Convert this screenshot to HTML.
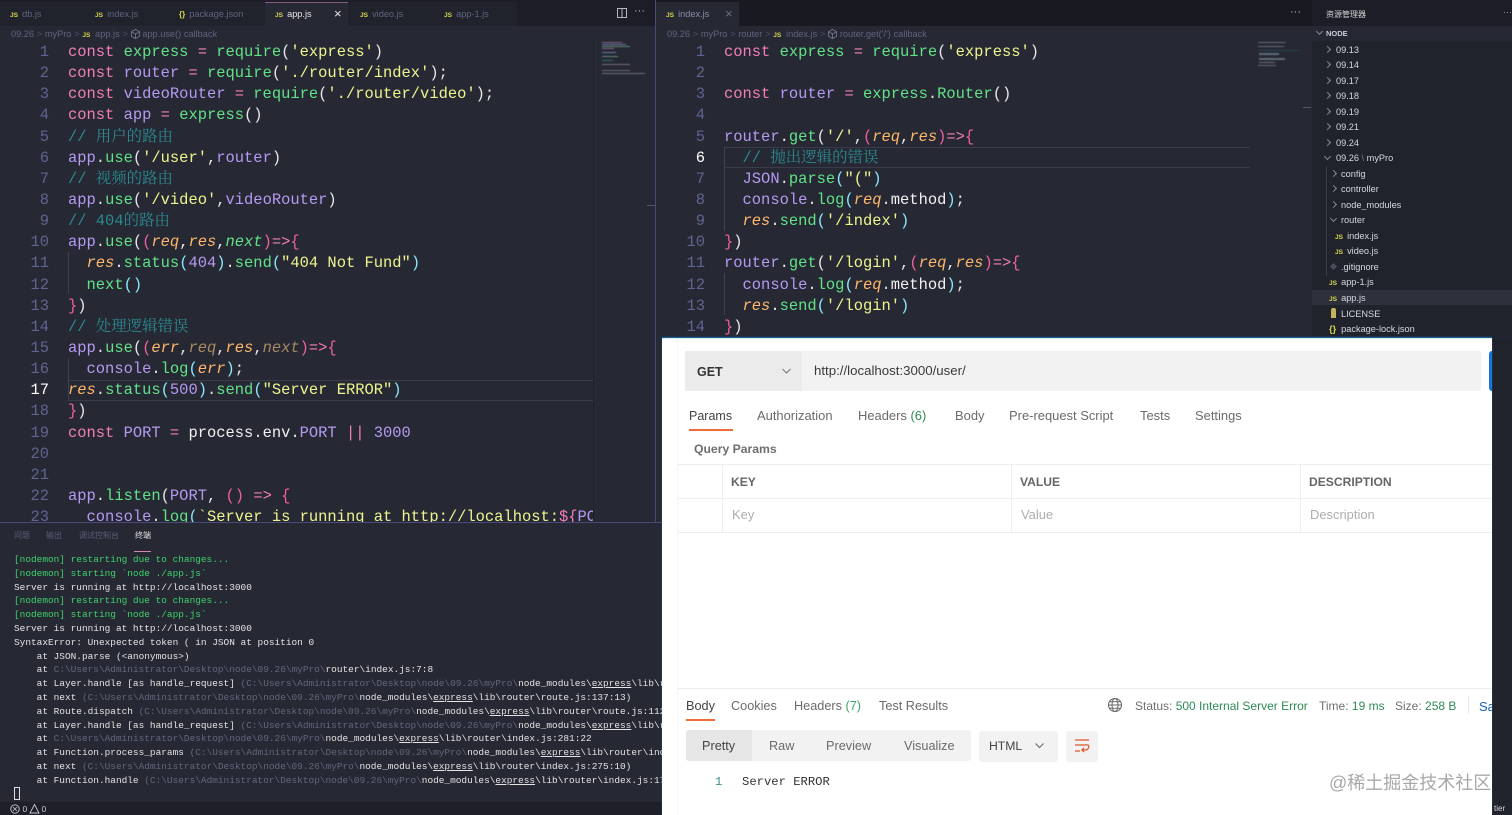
<!DOCTYPE html>
<html lang="zh">
<head>
<meta charset="utf-8">
<title>VS Code and Postman</title>
<style>
html,body{margin:0;padding:0;width:1512px;height:815px;overflow:hidden;background:#262833}
*{box-sizing:border-box}
.a{position:absolute;white-space:pre}
.code{position:absolute;font:15.45px/21.14px "Liberation Mono","Noto Serif CJK SC",monospace;color:#e8e8e8;white-space:pre;filter:blur(.3px)}
.nums{position:absolute;font:15.45px/21.14px "Liberation Mono",monospace;color:#5f6590;text-align:right;white-space:pre;filter:blur(.3px)}
.k{color:#f27fb8}.g{color:#62e388}.p{color:#b79af2}.s{color:#eef58f}.o{color:#ffb86c;font-style:italic}.d{color:#a88a62;font-style:italic}.w{color:#f2f2f2}.c{color:#8be9fd}.m{color:#2b8a90}.b{color:#f0609f}.wh{color:#fff}
.tab{position:absolute;top:8px;font:9.2px/12px "Liberation Sans",sans-serif;color:#5f6480;white-space:pre;filter:blur(.3px)}
.js{color:#d6d64e;font:bold 6.6px/12px "Liberation Sans",sans-serif;margin-right:4px}
.bc{position:absolute;top:28px;font:9.2px/12px "Liberation Sans",sans-serif;word-spacing:.2px;color:#60647f;white-space:pre;filter:blur(.3px)}
.term{position:absolute;left:14px;top:553px;width:648px;height:242px;overflow:hidden;font:9.45px/13.8px "Liberation Mono",monospace;color:#e4e4e4;white-space:pre;filter:blur(.25px)}
.n{color:#3ed46d}.q{color:#62677c}.u{text-decoration:underline}
.tt{position:absolute;top:530px;font:8px/12px "Liberation Sans","Noto Sans CJK SC",sans-serif;color:#5a5f78;filter:blur(.3px)}
.row{position:absolute;font:9.2px/12px "Liberation Sans",sans-serif;color:#d5d8e0;white-space:pre;filter:blur(.2px)}
.cr,.cd{position:absolute;width:5px;height:5px;border-right:1px solid #868a9a;border-bottom:1px solid #868a9a}
.cr{transform:rotate(-45deg)}.cd{transform:rotate(45deg)}
.pm{position:absolute;transform:translateY(1px);font:12.95px/16px "Liberation Sans",sans-serif;color:#6b6b6b;white-space:pre;filter:blur(.2px)}
.lo{font-size:12.7px}
.gr{color:#2f8a56}
</style>
</head>
<body>
<!-- left editor -->
<div class="a" style="left:0;top:0;width:655px;height:522px;background:#262833"></div>
<div class="a" style="left:0;top:0;width:655px;height:26px;background:#1c1d26"></div>
<div class="a" style="left:0;top:2px;width:517px;height:24px;background:#20222c"></div>
<div class="a" style="left:265px;top:2px;width:83px;height:24px;background:#262833;border-top:1px solid #8a5a86"></div>
<div class="tab" style="left:10px"><span class="js">JS</span>db.js</div>
<div class="tab" style="left:95px"><span class="js">JS</span>index.js</div>
<div class="tab" style="left:179px"><span class="js" style="font-size:8px">{}</span>package.json</div>
<div class="tab" style="left:275px;color:#e6e6e6"><span class="js">JS</span>app.js</div>
<div class="a" style="left:334px;top:8px;font:13px/12px 'Liberation Sans',sans-serif;color:#e8e8e8">×</div>
<div class="tab" style="left:360px"><span class="js">JS</span>video.js</div>
<div class="tab" style="left:444px"><span class="js">JS</span>app-1.js</div>
<svg class="a" style="left:617px;top:8px" width="10" height="10" viewBox="0 0 10 10"><rect x=".5" y=".5" width="9" height="9" fill="none" stroke="#b5b8c4"/><path d="M5 0v10" stroke="#b5b8c4"/></svg>
<div class="a" style="left:634px;top:4px;font:11px/14px 'Liberation Sans',sans-serif;color:#b5b8c4">···</div>
<div class="bc" style="left:11px">09.26 <span style="color:#4d5068">&gt;</span> myPro <span style="color:#4d5068">&gt;</span> <span class="js" style="margin-right:2px">JS</span> app.js <span style="color:#4d5068">&gt;</span> <svg width="9" height="10" viewBox="0 0 9 10" style="vertical-align:-2px"><path d="M4.500 .5 8.500 2.700V7.300L4.500 9.500 .5 7.300V2.700ZM.5 2.700 4.500 5 8.500 2.700M4.500 5V9.500" fill="none" stroke="#7a7e98" stroke-width=".8"/></svg> app.use() callback</div>

<div class="a" style="left:68px;top:380px;width:525px;height:21px;border-top:1px solid #3a3c49;border-bottom:1px solid #3a3c49"></div>
<div class="a" style="left:68px;top:252px;width:1px;height:42px;background:#3f4150"></div>
<div class="a" style="left:68px;top:358px;width:1px;height:42px;background:#3f4150"></div>
<div class="a" style="left:593px;top:40px;width:1px;height:482px;background:#1f2029"></div>
<div class="a" style="left:647px;top:205px;width:8px;height:1px;background:#555868"></div>
<div class="a" style="left:601px;top:41px;width:44px;height:38px;filter:blur(.5px);opacity:.7">
<div class="a" style="left:1px;top:1px;width:20px;height:1px;background:#a67fb5"></div>
<div class="a" style="left:1px;top:3px;width:24px;height:1px;background:#8f9ad0"></div>
<div class="a" style="left:1px;top:5px;width:28px;height:1px;background:#7fb58f"></div>
<div class="a" style="left:1px;top:7px;width:12px;height:1px;background:#a67fb5"></div>
<div class="a" style="left:1px;top:11px;width:14px;height:1px;background:#8f9ad0"></div>
<div class="a" style="left:1px;top:15px;width:16px;height:1px;background:#7fb58f"></div>
<div class="a" style="left:1px;top:19px;width:11px;height:1px;background:#3a8a90"></div>
<div class="a" style="left:1px;top:23px;width:28px;height:1px;background:#a08aa0"></div>
<div class="a" style="left:1px;top:29px;width:28px;height:1px;background:#7f8a9a"></div>
<div class="a" style="left:1px;top:32px;width:43px;height:1px;background:#8d8f9e"></div>
</div>

<div class="nums" style="left:10px;top:42px;width:39px;height:480px;overflow:hidden">1
2
3
4
5
6
7
8
9
10
11
12
13
14
15
16
<span class="wh">17</span>
18
19
20
21
22
23</div>
<div class="code" style="left:68px;top:42px;width:525px;height:480px;overflow:hidden"><span class="k">const</span> <span class="g">express</span> <span class="k">=</span> <span class="g">require</span>(<span class="s">'express'</span>)
<span class="k">const</span> <span class="p">router</span> <span class="k">=</span> <span class="g">require</span>(<span class="s">'./router/index'</span>);
<span class="k">const</span> <span class="p">videoRouter</span> <span class="k">=</span> <span class="g">require</span>(<span class="s">'./router/video'</span>);
<span class="k">const</span> <span class="p">app</span> <span class="k">=</span> <span class="g">express</span>()
<span class="m">// 用户的路由</span>
<span class="p">app</span>.<span class="g">use</span>(<span class="s">'/user'</span>,<span class="p">router</span>)
<span class="m">// 视频的路由</span>
<span class="p">app</span>.<span class="g">use</span>(<span class="s">'/video'</span>,<span class="p">videoRouter</span>)
<span class="m">// 404的路由</span>
<span class="p">app</span>.<span class="g">use</span>(<span class="b">(</span><span class="o">req</span>,<span class="o">res</span>,<span class="g" style="font-style:italic">next</span><span class="b">)</span><span class="k">=&gt;</span><span class="b">{</span>
  <span class="o">res</span>.<span class="g">status</span><span class="c">(</span><span class="p">404</span><span class="c">)</span>.<span class="g">send</span><span class="c">(</span><span class="s">"404 Not Fund"</span><span class="c">)</span>
  <span class="g">next</span><span class="c">()</span>
<span class="b">}</span>)
<span class="m">// 处理逻辑错误</span>
<span class="p">app</span>.<span class="g">use</span>(<span class="b">(</span><span class="o">err</span>,<span class="d">req</span>,<span class="o">res</span>,<span class="d">next</span><span class="b">)</span><span class="k">=&gt;</span><span class="b">{</span>
  <span class="p">console</span>.<span class="g">log</span><span class="c">(</span><span class="o">err</span><span class="c">)</span>;
<span class="o">res</span>.<span class="g">status</span><span class="c">(</span><span class="p">500</span><span class="c">)</span>.<span class="g">send</span><span class="c">(</span><span class="s">"Server ERROR"</span><span class="c">)</span>
<span class="b">}</span>)
<span class="k">const</span> <span class="p">PORT</span> <span class="k">=</span> <span class="w">process</span>.<span class="w">env</span>.<span class="p">PORT</span> <span class="k">||</span> <span class="p">3000</span>


<span class="p">app</span>.<span class="g">listen</span>(<span class="p">PORT</span>, <span class="b">()</span> <span class="k">=&gt;</span> <span class="b">{</span>
  <span class="p">console</span>.<span class="g">log</span><span class="c">(</span><span class="s">`Server is running at http://localhost:</span><span class="k">${</span><span class="p">PORT</span></div>

<!-- right editor -->
<div class="a" style="left:655px;top:0;width:657px;height:522px;background:#262833;border-left:1px solid #4a4a78"></div>
<div class="a" style="left:656px;top:0;width:656px;height:26px;background:#191a21"></div>
<div class="a" style="left:656px;top:2px;width:83px;height:24px;background:#262833"></div>
<div class="tab" style="left:666px;color:#8a8ea6"><span class="js">JS</span>index.js</div>
<div class="a" style="left:725px;top:8px;font:13px/12px 'Liberation Sans',sans-serif;color:#6a6e86">×</div>
<div class="a" style="left:1290px;top:5px;font:11px/14px 'Liberation Sans',sans-serif;color:#b5b8c4">···</div>
<div class="bc" style="left:667px">09.26 <span style="color:#4d5068">&gt;</span> myPro <span style="color:#4d5068">&gt;</span> router <span style="color:#4d5068">&gt;</span> <span class="js" style="margin-right:2px">JS</span> index.js <span style="color:#4d5068">&gt;</span> <svg width="9" height="10" viewBox="0 0 9 10" style="vertical-align:-2px"><path d="M4.500 .5 8.500 2.700V7.300L4.500 9.500 .5 7.300V2.700ZM.5 2.700 4.500 5 8.500 2.700M4.500 5V9.500" fill="none" stroke="#7a7e98" stroke-width=".8"/></svg> router.get('/') callback</div>
<div class="a" style="left:724px;top:147px;width:526px;height:21px;border-top:1px solid #3a3c49;border-bottom:1px solid #3a3c49"></div>
<div class="a" style="left:724px;top:147px;width:1px;height:84px;background:#3f4150"></div>
<div class="a" style="left:724px;top:273px;width:1px;height:42px;background:#3f4150"></div>
<div class="a" style="left:1303px;top:107px;width:8px;height:1px;background:#555868"></div>
<div class="a" style="left:1257px;top:41px;width:44px;height:26px;filter:blur(.5px);opacity:.65">
<div class="a" style="left:1px;top:1px;width:28px;height:1px;background:#8d8f9e"></div>
<div class="a" style="left:1px;top:5px;width:26px;height:1px;background:#8d8f9e"></div>
<div class="a" style="left:1px;top:9px;width:43px;height:1px;background:#1f5560"></div>
<div class="a" style="left:2px;top:12px;width:20px;height:2px;background:#7f8f9a"></div>
<div class="a" style="left:2px;top:17px;width:26px;height:2px;background:#7f8f9a"></div>
<div class="a" style="left:2px;top:21px;width:16px;height:1px;background:#9a8f9a"></div>
<div class="a" style="left:1px;top:24px;width:18px;height:1px;background:#7f8f9a"></div>
</div>
<div class="nums" style="left:666px;top:42px;width:39px;height:296px;overflow:hidden">1
2
3
4
5
<span class="wh">6</span>
7
8
9
10
11
12
13
14</div>
<div class="code" style="left:724px;top:42px;width:530px;height:296px;overflow:hidden"><span class="k">const</span> <span class="g">express</span> <span class="k">=</span> <span class="g">require</span>(<span class="s">'express'</span>)

<span class="k">const</span> <span class="p">router</span> <span class="k">=</span> <span class="g">express</span>.<span class="g">Router</span>()

<span class="p">router</span>.<span class="g">get</span>(<span class="s">'/'</span>,<span class="b">(</span><span class="o">req</span>,<span class="o">res</span><span class="b">)</span><span class="k">=&gt;</span><span class="b">{</span>
  <span class="m">// 抛出逻辑的错误</span>
  <span class="p">JSON</span>.<span class="g">parse</span><span class="c">(</span><span class="s">"("</span><span class="c">)</span>
  <span class="p">console</span>.<span class="g">log</span><span class="c">(</span><span class="o">req</span>.<span class="w">method</span><span class="c">)</span>;
  <span class="o">res</span>.<span class="g">send</span><span class="c">(</span><span class="s">'/index'</span><span class="c">)</span>
<span class="b">}</span>)
<span class="p">router</span>.<span class="g">get</span>(<span class="s">'/login'</span>,<span class="b">(</span><span class="o">req</span>,<span class="o">res</span><span class="b">)</span><span class="k">=&gt;</span><span class="b">{</span>
  <span class="p">console</span>.<span class="g">log</span><span class="c">(</span><span class="o">req</span>.<span class="w">method</span><span class="c">)</span>;
  <span class="o">res</span>.<span class="g">send</span><span class="c">(</span><span class="s">'/login'</span><span class="c">)</span>
<span class="b">}</span>)</div>

<!-- terminal -->
<div class="a" style="left:0;top:522px;width:662px;height:280px;background:#262833;border-top:1px solid #4a4a78"></div>
<div class="tt" style="left:14px">问题</div>
<div class="tt" style="left:46px">输出</div>
<div class="tt" style="left:79px">调试控制台</div>
<div class="tt" style="left:135px;color:#e6e6e6">终端</div>
<div class="a" style="left:134px;top:551px;width:17px;height:1px;background:#d08aa8"></div>
<div class="term"><span class="n">[nodemon] restarting due to changes...
[nodemon] starting `node ./app.js`</span>
Server is running at http://localhost:3000
<span class="n">[nodemon] restarting due to changes...
[nodemon] starting `node ./app.js`</span>
Server is running at http://localhost:3000
SyntaxError: Unexpected token ( in JSON at position 0
    at JSON.parse (&lt;anonymous&gt;)
    at <span class="q">C:\Users\Administrator\Desktop\node\09.26\myPro\</span>router\index.js:7:8
    at Layer.handle [as handle_request] <span class="q">(C:\Users\Administrator\Desktop\node\09.26\myPro\</span>node_modules\<span class="u">express</span>\lib\router\layer.js:95:5)
    at next <span class="q">(C:\Users\Administrator\Desktop\node\09.26\myPro\</span>node_modules\<span class="u">express</span>\lib\router\route.js:137:13)
    at Route.dispatch <span class="q">(C:\Users\Administrator\Desktop\node\09.26\myPro\</span>node_modules\<span class="u">express</span>\lib\router\route.js:112:3)
    at Layer.handle [as handle_request] <span class="q">(C:\Users\Administrator\Desktop\node\09.26\myPro\</span>node_modules\<span class="u">express</span>\lib\router\layer.js:95:5)
    at <span class="q">C:\Users\Administrator\Desktop\node\09.26\myPro\</span>node_modules\<span class="u">express</span>\lib\router\index.js:281:22
    at Function.process_params <span class="q">(C:\Users\Administrator\Desktop\node\09.26\myPro\</span>node_modules\<span class="u">express</span>\lib\router\index.js:341:12)
    at next <span class="q">(C:\Users\Administrator\Desktop\node\09.26\myPro\</span>node_modules\<span class="u">express</span>\lib\router\index.js:275:10)
    at Function.handle <span class="q">(C:\Users\Administrator\Desktop\node\09.26\myPro\</span>node_modules\<span class="u">express</span>\lib\router\index.js:174:3)</div>
<div class="a" style="left:14px;top:787px;width:6px;height:13px;border:1px solid #e0e0e0"></div>
<div class="a" style="left:0;top:802px;width:662px;height:13px;background:#1e1f28"></div>
<svg class="a" style="left:10px;top:803px" width="38" height="12" viewBox="0 0 38 12"><circle cx="5" cy="6" r="4.200" fill="none" stroke="#c8c8d0" stroke-width=".9"/><path d="M3.100 4.100 6.900 7.900M6.900 4.100 3.100 7.900" stroke="#c8c8d0" stroke-width=".8"/><text x="12.500" y="9" font-family="Liberation Sans" font-size="8.500" fill="#c8c8d0">0</text><path d="M24.500 1.500 29 10H20Z" fill="none" stroke="#c8c8d0" stroke-width=".9"/><text x="31.500" y="9" font-family="Liberation Sans" font-size="8.500" fill="#c8c8d0">0</text></svg>

<!-- sidebar -->
<div class="a" style="left:1312px;top:0;width:200px;height:815px;background:#20222c"></div>
<div class="a" style="left:1312px;top:0;width:200px;height:26px;background:#1c1d26"></div>
<div class="a" style="left:1312px;top:26px;width:200px;height:15px;background:#252733"></div>
<div class="a" style="left:1312px;top:290px;width:200px;height:15px;background:#2e303c"></div>
<div class="row" style="left:1326px;top:9px;font:8px/12px 'Liberation Sans','Noto Sans CJK SC',sans-serif;color:#d5d5d5">资源管理器</div>
<div class="a" style="left:1503px;top:5px;font:9px/14px 'Liberation Sans',sans-serif;color:#9a9eb0">···</div>
<div class="cd" style="left:1317px;top:29px"></div>
<div class="row" style="left:1326px;top:28px;font-weight:bold;font-size:7.500px;color:#c9ccd6">NODE</div>
<div class="cr" style="left:1325px;top:47px"></div><div class="row" style="left:1336px;top:44px">09.13</div>
<div class="cr" style="left:1325px;top:62px"></div><div class="row" style="left:1336px;top:59px">09.14</div>
<div class="cr" style="left:1325px;top:78px"></div><div class="row" style="left:1336px;top:75px">09.17</div>
<div class="cr" style="left:1325px;top:93px"></div><div class="row" style="left:1336px;top:90px">09.18</div>
<div class="cr" style="left:1325px;top:109px"></div><div class="row" style="left:1336px;top:106px">09.19</div>
<div class="cr" style="left:1325px;top:124px"></div><div class="row" style="left:1336px;top:121px">09.21</div>
<div class="cr" style="left:1325px;top:140px"></div><div class="row" style="left:1336px;top:137px">09.24</div>
<div class="cd" style="left:1325px;top:154px"></div><div class="row" style="left:1336px;top:152px">09.26<span style="color:#777b8c"> \ </span>myPro</div>
<div class="a" style="left:1326px;top:166px;width:1px;height:110px;background:#3a3c49"></div>
<div class="cr" style="left:1331px;top:171px"></div><div class="row" style="left:1341px;top:168px">config</div>
<div class="cr" style="left:1331px;top:186px"></div><div class="row" style="left:1341px;top:183px">controller</div>
<div class="cr" style="left:1331px;top:202px"></div><div class="row" style="left:1341px;top:199px">node_modules</div>
<div class="cd" style="left:1331px;top:216px"></div><div class="row" style="left:1341px;top:214px">router</div>
<div class="row" style="left:1335px;top:230px"><span class="js">JS</span>index.js</div>
<div class="row" style="left:1335px;top:245px"><span class="js">JS</span>video.js</div>
<div class="a" style="left:1331px;top:264px;width:5px;height:5px;background:#4a4e5c;transform:rotate(45deg)"></div><div class="row" style="left:1341px;top:261px">.gitignore</div>
<div class="row" style="left:1329px;top:276px"><span class="js">JS</span>app-1.js</div>
<div class="row" style="left:1329px;top:292px"><span class="js">JS</span>app.js</div>
<div class="a" style="left:1331px;top:308px;width:5px;height:10px;background:#c4b45a;border-radius:2px 2px 0 0"></div><div class="row" style="left:1341px;top:308px">LICENSE</div>
<div class="row" style="left:1329px;top:323px"><span style="color:#d6d64e;margin-right:5px;font-weight:bold">{}</span>package-lock.json</div>

<!-- postman -->
<div class="a" style="left:662px;top:336px;width:850px;height:479px;background:#1f2430"></div>
<div class="a" style="left:1493px;top:340px;width:19px;height:475px;background:#20222c"></div>
<div class="a" style="left:662px;top:338px;width:830px;height:477px;background:#fff;border-top:1px solid #d8eef5;box-shadow:0 -1px 1px #1c6ea8"></div>
<div class="a" style="left:677px;top:339px;width:1px;height:476px;background:#f6f6f6"></div>
<div class="a" style="left:685px;top:351px;width:796px;height:40px;background:#f2f2f2;border-radius:2px"></div>
<div class="a" style="left:685px;top:351px;width:117px;height:40px;background:#ebebeb;border-radius:2px 0 0 2px"></div>
<div class="a" style="left:1489px;top:351px;width:3px;height:40px;background:#1a73d9;border-radius:3px 0 0 3px"></div>
<div class="pm" style="left:697px;top:363px;font-size:12.5px;font-weight:bold;color:#333">GET</div>
<svg class="a" style="left:781px;top:367px" width="11" height="8" viewBox="0 0 11 8"><path d="M1.500 2 5.500 6 9.500 2" fill="none" stroke="#777" stroke-width="1"/></svg>
<div class="pm" style="left:814px;top:362px;font-size:13.25px;color:#3a3a3a">http://localhost:3000/user/</div>
<div class="pm" style="left:689px;top:407px;font-size:12.5px;color:#444">Params</div>
<div class="a" style="left:689px;top:429px;width:44px;height:2px;background:#f26b3a"></div>
<div class="pm" style="left:757px;top:407px">Authorization</div>
<div class="pm" style="left:858px;top:407px">Headers <span class="gr">(6)</span></div>
<div class="pm" style="left:955px;top:407px">Body</div>
<div class="pm" style="left:1009px;top:407px">Pre-request Script</div>
<div class="pm" style="left:1140px;top:407px">Tests</div>
<div class="pm" style="left:1195px;top:407px">Settings</div>
<div class="pm" style="left:694px;top:440px;font-weight:bold;color:#6e6e6e;font-size:12.2px">Query Params</div>
<div class="a" style="left:678px;top:464px;width:814px;height:1px;background:#eee"></div>
<div class="a" style="left:678px;top:498px;width:814px;height:1px;background:#eee"></div>
<div class="a" style="left:678px;top:532px;width:814px;height:1px;background:#eee"></div>
<div class="a" style="left:722px;top:464px;width:1px;height:68px;background:#eee"></div>
<div class="a" style="left:1011px;top:464px;width:1px;height:68px;background:#eee"></div>
<div class="a" style="left:1300px;top:464px;width:1px;height:68px;background:#eee"></div>
<div class="pm" style="left:731px;top:473px;font-size:12.1px;font-weight:bold;color:#666">KEY</div>
<div class="pm" style="left:1020px;top:473px;font-size:12.1px;font-weight:bold;color:#666">VALUE</div>
<div class="pm" style="left:1309px;top:473px;font-size:12.1px;font-weight:bold;color:#666">DESCRIPTION</div>
<div class="pm" style="left:732px;top:506px;color:#adadad">Key</div>
<div class="pm" style="left:1021px;top:506px;color:#adadad">Value</div>
<div class="pm" style="left:1310px;top:506px;color:#adadad">Description</div>

<div class="a" style="left:678px;top:688px;width:814px;height:1px;background:#eee"></div>
<div class="pm lo" style="left:686px;top:697px;color:#444">Body</div>
<div class="a" style="left:686px;top:719px;width:29px;height:2px;background:#f26b3a"></div>
<div class="pm lo" style="left:731px;top:697px">Cookies</div>
<div class="pm lo" style="left:794px;top:697px">Headers <span style="color:#3aa565">(7)</span></div>
<div class="pm lo" style="left:879px;top:697px">Test Results</div>
<svg class="a" style="left:1107px;top:697px" width="16" height="16" viewBox="0 0 16 16"><g fill="none" stroke="#666" stroke-width="1"><circle cx="8" cy="8" r="6.500"/><ellipse cx="8" cy="8" rx="3" ry="6.500"/><path d="M1.500 8h13M2.500 4.800h11M2.500 11.200h11"/></g></svg>
<div class="pm" style="left:1135px;top:697px;font-size:12px;color:#707070">Status: <span class="gr">500 Internal Server Error</span></div>
<div class="pm" style="left:1319px;top:697px;font-size:12px;color:#707070">Time: <span class="gr">19 ms</span></div>
<div class="pm" style="left:1395px;top:697px;font-size:12px;color:#707070">Size: <span class="gr">258 B</span></div>
<div class="a" style="left:1468px;top:696px;width:1px;height:18px;background:#e8e8e8"></div>
<div class="pm" style="left:1479px;top:698px;color:#1a62b5;width:13px;overflow:hidden">Sa</div>
<div class="a" style="left:686px;top:730px;width:285px;height:31px;background:#f2f2f2;border-radius:3px"></div>
<div class="a" style="left:686px;top:730px;width:66px;height:31px;background:#e6e6e6;border-radius:3px 0 0 3px"></div>
<div class="pm lo" style="left:702px;top:737px;color:#444">Pretty</div>
<div class="pm lo" style="left:769px;top:737px">Raw</div>
<div class="pm lo" style="left:826px;top:737px">Preview</div>
<div class="pm lo" style="left:904px;top:737px">Visualize</div>
<div class="a" style="left:979px;top:731px;width:79px;height:31px;background:#f2f2f2;border-radius:3px"></div>
<div class="pm" style="left:989px;top:737px;font-size:12.2px;color:#444">HTML</div>
<svg class="a" style="left:1034px;top:742px" width="11" height="8" viewBox="0 0 11 8"><path d="M1.500 1.500 5.500 5.500 9.500 1.500" fill="none" stroke="#666" stroke-width="1"/></svg>
<div class="a" style="left:1066px;top:731px;width:32px;height:31px;background:#f2f2f2;border-radius:3px"></div>
<svg class="a" style="left:1074px;top:738px" width="16" height="16" viewBox="0 0 16 16"><path d="M1 2h14M1 7h13.500M1 13h5M14.500 7c1 3-1 5-3 5H8M10 10l-2.200 2 2.200 2" fill="none" stroke="#e2562b" stroke-width="1.200"/></svg>
<div class="pm" style="left:715px;top:773px;font:12.2px/16px 'Liberation Mono',monospace;color:#3a8f8f">1</div>
<div class="pm" style="left:742px;top:773px;font:12.2px/16px 'Liberation Mono',monospace;color:#333">Server ERROR</div>
<div class="a" style="left:1329px;top:771px;font:18px/24px 'Liberation Sans','Noto Sans CJK SC',sans-serif;color:#a8a8a8;filter:blur(.2px)">@稀土掘金技术社区</div>
<div class="a" style="left:1494px;top:804px;font:8px/10px 'Liberation Sans',sans-serif;color:#d8d8d8">tier</div>
</body>
</html>
